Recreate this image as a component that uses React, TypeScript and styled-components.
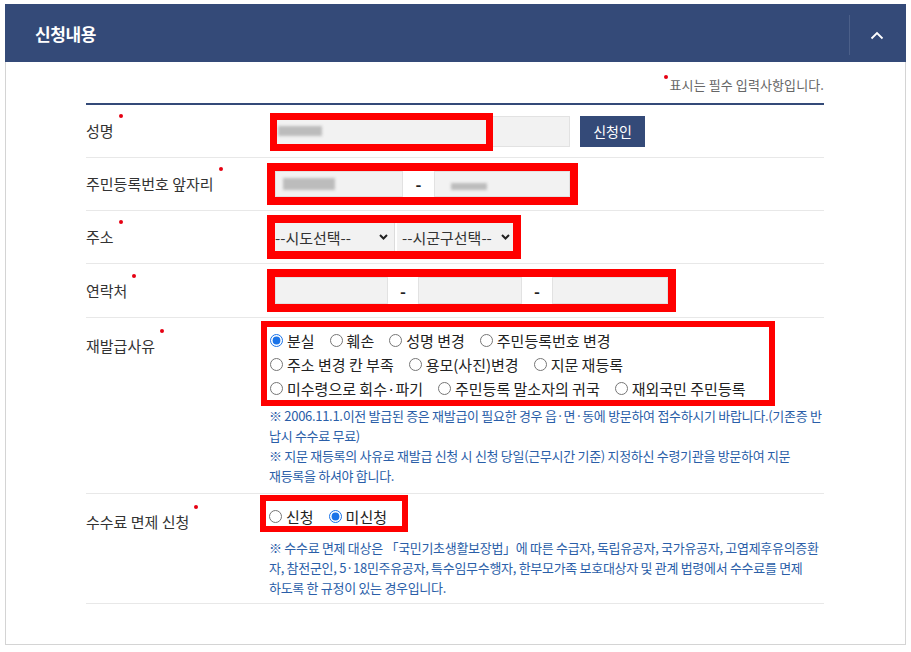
import * as React from 'react';
import styled, { createGlobalStyle } from 'styled-components';

const NAVY = '#344a78';

const GlobalStyle = createGlobalStyle`
  body {
    margin: 0;
    background: #fff;
    font-family: "Noto Sans CJK KR", "Noto Sans", sans-serif;
    color: #333;
  }
  * { box-sizing: border-box; }
`;

type RadioOpt = { label: string; checked?: boolean };

const reasonLines: RadioOpt[][] = [
    [{ label: '분실', checked: true }, { label: '훼손' }, { label: '성명 변경' }, { label: '주민등록번호 변경' }],
    [{ label: '주소 변경 칸 부족' }, { label: '용모(사진)변경' }, { label: '지문 재등록' }],
    [{ label: '미수령으로 회수·파기' }, { label: '주민등록 말소자의 귀국' }, { label: '재외국민 주민등록' }],
];

const reasonNotes = [
    ['※ 2006.11.1.이전 발급된 증은 재발급이 필요한 경우 읍·면·동에 방문하여 접수하시기 바랍니다.(기존증 반', '납시 수수료 무료)'],
    ['※ 지문 재등록의 사유로 재발급 신청 시 신청 당일(근무시간 기준) 지정하신 수령기관을 방문하여 지문', '재등록을 하셔야 합니다.'],
];

const feeNote = [
    '※ 수수료 면제 대상은 「국민기초생활보장법」에 따른 수급자, 독립유공자, 국가유공자, 고엽제후유의증환',
    '자, 참전군인, 5·18민주유공자, 특수임무수행자, 한부모가족 보호대상자 및 관계 법령에서 수수료를 면제',
    '하도록 한 규정이 있는 경우입니다.',
];

const Chevron = () => (
    <svg width="9" height="6" viewBox="0 0 9 6">
        <path d="M1 1 L4.5 4.5 L8 1" fill="none" stroke="#222" strokeWidth="2" />
    </svg>
);

const App: React.FC = () => {
    return (
        <Page>
            <GlobalStyle />
            <Panel>
                <Header>
                    <HeaderTitle>신청내용</HeaderTitle>
                    <Toggle>
                        <svg width="14" height="9" viewBox="0 0 14 9">
                            <path d="M1.5 7.5 L7 2 L12.5 7.5" fill="none" stroke="#fff" strokeWidth="1.8" />
                        </svg>
                    </Toggle>
                </Header>
                <Body>
                    <Notice>
                        <NoticeDot />
                        표시는 필수 입력사항입니다.
                    </Notice>
                    <Table>
                        <Row height={53}>
                            <Label><Req>성명</Req></Label>
                            <Field>
                                <NameBox>
                                    <Input width={300} height={31}><Blur w={44} h={10} /></Input>
                                    <Overlay />
                                </NameBox>
                                <Button>신청인</Button>
                            </Field>
                        </Row>
                        <Row height={53}>
                            <Label><Req>주민등록번호 앞자리</Req></Label>
                            <Field>
                                <Marked border={8}>
                                    <Input width={128} height={26}><Blur w={52} h={12} /></Input>
                                    <Dash width={31}>-</Dash>
                                    <Input width={136} height={26}><Blur w={36} h={7} gap={9} /></Input>
                                </Marked>
                            </Field>
                        </Row>
                        <Row height={53}>
                            <Label><Req>주소</Req></Label>
                            <Field>
                                <Marked border={8}>
                                    <Select width={120}>
                                        <span>--시도선택--</span>
                                        <Chevron />
                                    </Select>
                                    <Select width={116}>
                                        <span>--시군구선택--</span>
                                        <Chevron />
                                    </Select>
                                </Marked>
                            </Field>
                        </Row>
                        <Row height={54}>
                            <Label><Req>연락처</Req></Label>
                            <Field>
                                <Marked border={8}>
                                    <Input width={113} height={27} />
                                    <Dash width={30}>-</Dash>
                                    <Input width={104} height={27} />
                                    <Dash width={30}>-</Dash>
                                    <Input width={116} height={27} />
                                </Marked>
                            </Field>
                        </Row>
                        <Row height={176} top>
                            <Label top><Req>재발급사유</Req></Label>
                            <Field column>
                                <RadioBox>
                                    {reasonLines.map((line, i) => (
                                        <RadioLine key={i}>
                                            {line.map(opt => (
                                                <RadioItem key={opt.label}>
                                                    <input type="radio" name="reason" defaultChecked={opt.checked} />
                                                    {opt.label}
                                                </RadioItem>
                                            ))}
                                        </RadioLine>
                                    ))}
                                </RadioBox>
                                <Notes>
                                    {reasonNotes.map((note, i) =>
                                        note.map((line, j) => <NoteLine key={i + '-' + j}>{line}</NoteLine>)
                                    )}
                                </Notes>
                            </Field>
                        </Row>
                        <Row height={110} top>
                            <Label top><Req>수수료 면제 신청</Req></Label>
                            <Field column>
                                <FeeBox>
                                    <RadioItem>
                                        <input type="radio" name="fee" />
                                        신청
                                    </RadioItem>
                                    <RadioItem>
                                        <input type="radio" name="fee" defaultChecked />
                                        미신청
                                    </RadioItem>
                                </FeeBox>
                                <Notes fee>
                                    {feeNote.map(line => <NoteLine key={line}>{line}</NoteLine>)}
                                </Notes>
                            </Field>
                        </Row>
                    </Table>
                </Body>
            </Panel>
        </Page>
    );
};

export default App;

const Page = styled.div`
    padding: 4px 5px 7px 5px;
`;

const Panel = styled.section`
    width: 901px;
    height: 641px;
    display: flex;
    flex-direction: column;
`;

const Header = styled.div`
    height: 58px;
    background: ${NAVY};
    display: flex;
    align-items: center;
    justify-content: space-between;
    padding-left: 30px;
    padding-right: 2px;
`;

const HeaderTitle = styled.h2`
    margin: 0;
    color: #fff;
    font-size: 17px;
    font-weight: 700;
    letter-spacing: -0.4px;
`;

const Toggle = styled.div`
    width: 55px;
    height: 40px;
    margin-top: 4px;
    border-left: 1px solid #4b5f89;
    display: flex;
    align-items: center;
    justify-content: center;
`;

const Body = styled.div`
    flex: 1;
    border: 1px solid #d4d4d4;
    border-top: none;
    padding: 14px 81px 0 80px;
`;

const Notice = styled.div`
    display: flex;
    justify-content: flex-end;
    font-size: 13px;
    line-height: 18px;
    color: #666;
    letter-spacing: 0.1px;
`;

const NoticeDot = styled.span`
    width: 4px;
    height: 4px;
    border-radius: 50%;
    background: #e60012;
    margin: -1px 2px 0 0;
`;

const Table = styled.div`
    margin-top: 9px;
    border-top: 2px solid ${NAVY};
`;

const Row = styled.div<{ height: number; top?: boolean }>`
    display: grid;
    grid-template-columns: 182px 1fr;
    align-items: ${p => (p.top ? 'start' : 'center')};
    height: ${p => p.height}px;
    border-bottom: 1px solid #e8e8e8;
`;

const Label = styled.div<{ top?: boolean }>`
    font-size: 15px;
    line-height: 20px;
    color: #333;
    padding-top: ${p => (p.top ? '18px' : '0')};
`;

const Req = styled.span`
    position: relative;
    &::after {
        content: '';
        position: absolute;
        right: -9px;
        top: -6px;
        width: 4px;
        height: 4px;
        border-radius: 50%;
        background: #e60012;
    }
`;

const Field = styled.div<{ column?: boolean }>`
    display: flex;
    flex-direction: ${p => (p.column ? 'column' : 'row')};
    align-items: ${p => (p.column ? 'flex-start' : 'center')};
`;

const NameBox = styled.div`
    position: relative;
    margin-left: 2px;
`;

const Overlay = styled.div`
    position: absolute;
    left: 0;
    top: -3px;
    width: 223px;
    height: 38px;
    border: 7px solid #f00;
`;

const Input = styled.div<{ width: number; height: number }>`
    width: ${p => p.width}px;
    height: ${p => p.height}px;
    background: #f2f2f2;
    border: 1px solid #e2e2e2;
    display: flex;
    align-items: center;
    padding-left: 7px;
`;

const Blur = styled.span<{ w: number; h: number; gap?: number }>`
    display: block;
    width: ${p => p.w}px;
    height: ${p => p.h}px;
    margin-left: ${p => p.gap || 0}px;
    margin-top: ${p => (p.gap ? 4 : 0)}px;
    background: #bcbcbc;
    filter: blur(1.5px);
`;

const Button = styled.button`
    margin-left: 10px;
    width: 65px;
    height: 31px;
    border: none;
    background: ${NAVY};
    color: #fff;
    font-family: inherit;
    font-size: 14px;
`;

const Marked = styled.div<{ border: number }>`
    display: flex;
    border: ${p => p.border}px solid #f00;
    margin-left: -1px;
    background: #fff;
`;

const Dash = styled.div<{ width: number }>`
    width: ${p => p.width}px;
    display: flex;
    align-items: center;
    justify-content: center;
    font-size: 16px;
    font-weight: 700;
    color: #222;
    background: #fff;
`;

const Select = styled.div<{ width: number }>`
    width: ${p => p.width}px;
    height: 28px;
    background: #f2f2f2;
    border-right: 1px solid #dcdcdc;
    display: flex;
    align-items: center;
    justify-content: space-between;
    padding-right: 6px;
    font-size: 15px;
    color: #333;
    white-space: nowrap;
    & + & {
        border-right: none;
        padding-left: 5px;
        margin-left: 2px;
        padding-right: 3px;
    }
`;

const RadioBox = styled.div`
    width: 514px;
    margin-left: -7px;
    margin-top: 3px;
    border: 6px solid #f00;
    padding: 1px 0 0 2px;
`;

const RadioLine = styled.div`
    display: flex;
    height: 24px;
    align-items: center;
`;

const RadioItem = styled.label`
    display: inline-flex;
    align-items: center;
    margin-right: 14px;
    font-size: 15px;
    color: #222;
    white-space: nowrap;
    input {
        width: 13px;
        height: 13px;
        margin: 0 4px 0 1px;
        accent-color: #1a73e8;
    }
`;

const FeeBox = styled.div`
    display: flex;
    width: 148px;
    height: 37px;
    margin-left: -8px;
    margin-top: 1px;
    border: 6px solid #f00;
    padding: 5px 0 0 2px;
    align-items: center;
    & > label:last-child { margin-right: 0; }
`;

const Notes = styled.div<{ fee?: boolean }>`
    margin-top: ${p => (p.fee ? '6px' : '0')};
    margin-left: 1px;
`;

const NoteLine = styled.div`
    font-size: 13px;
    line-height: 20px;
    color: #2a5ea8;
    letter-spacing: -0.3px;
    white-space: nowrap;
`;
